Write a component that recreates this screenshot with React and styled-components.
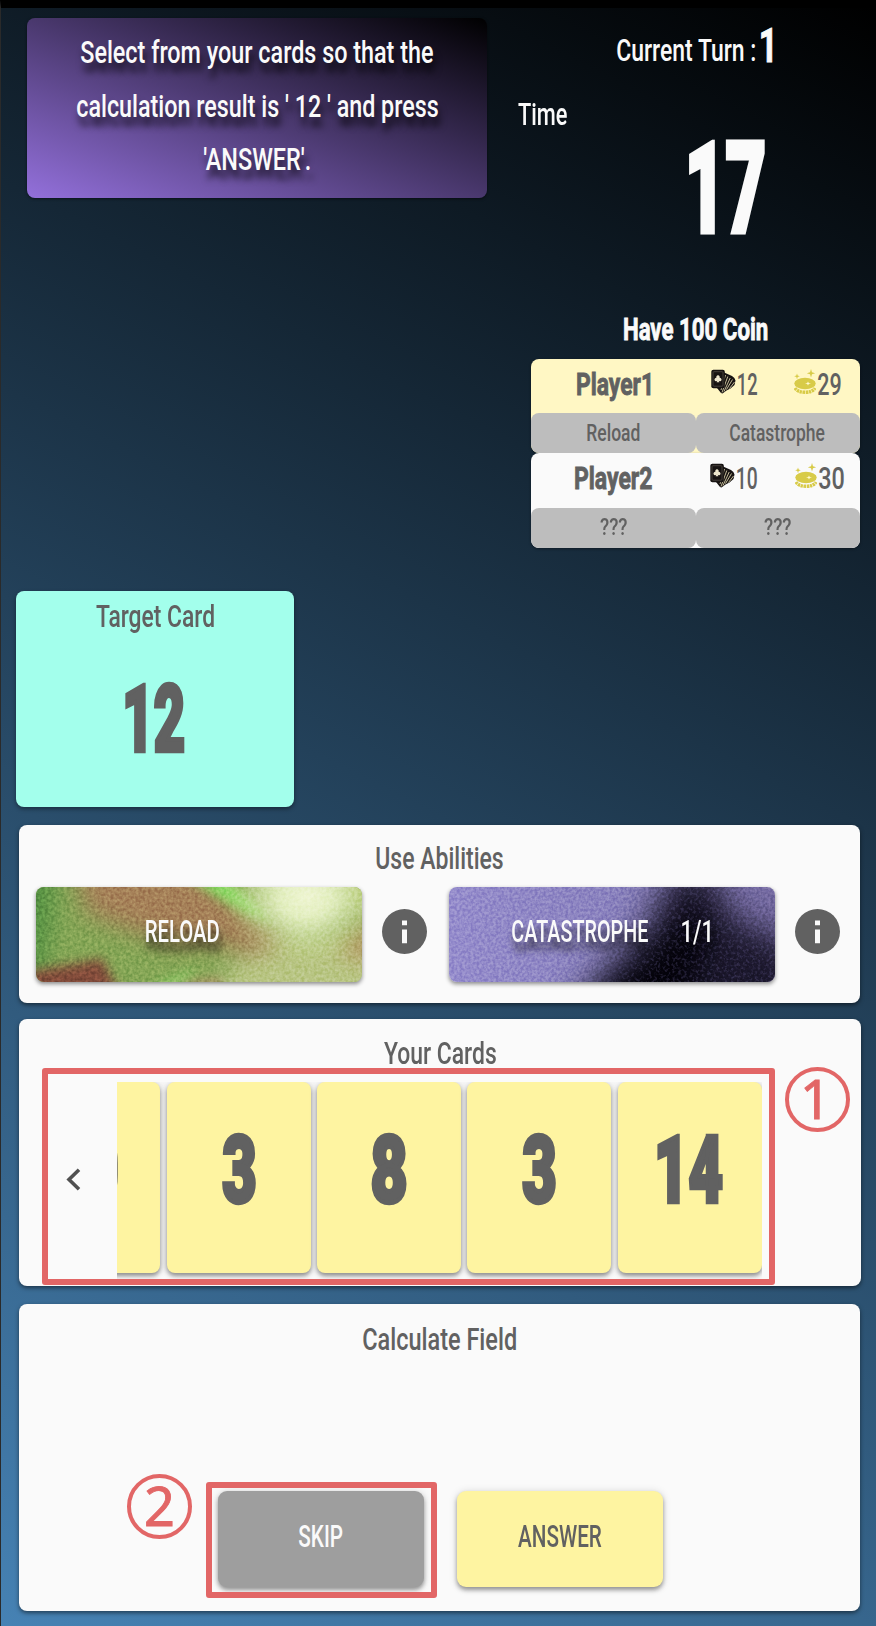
import React, { useLayoutEffect, useRef, useState } from "react";
import styled, { createGlobalStyle } from "styled-components";

const GlobalStyle = createGlobalStyle`
  * { box-sizing: border-box; }
  body { margin: 0; background: #000; font-family: Roboto, "Liberation Sans", sans-serif; }
`;

const INK = "#616161";
const PAPER = "#fafafa";
const RED = "#e26666";

/* ---------- condensed text ---------- */

const TextBox = styled.span`
  display: inline-block;
  flex: none;
  width: ${(p) => p.$width}px;
  line-height: ${(p) => p.$line}px;
  height: ${(p) => p.$line}px;
  font-size: ${(p) => p.$size}px;
  font-weight: ${(p) => p.$weight};
  -webkit-text-stroke: ${(p) => p.$stroke}px currentColor;
  text-align: left;
  white-space: pre;
`;

const TextInk = styled.span`
  display: inline-block;
  transform-origin: 0 50%;
`;

function Condensed({ children, width, size = 31, weight = 500, line = 30, stroke = 0 }) {
  const ref = useRef(null);
  const [transform, setTransform] = useState("none");
  useLayoutEffect(() => {
    const ctx = document.createElement("canvas").getContext("2d");
    ctx.font = getComputedStyle(ref.current).font;
    const m = ctx.measureText(children);
    const ink = m.actualBoundingBoxRight + m.actualBoundingBoxLeft + stroke;
    setTransform(`scaleX(${width / ink}) translateX(${m.actualBoundingBoxLeft + stroke / 2}px)`);
  }, [children, width, stroke]);
  return (
    <TextBox $width={width} $size={size} $weight={weight} $line={line} $stroke={stroke}>
      <TextInk ref={ref} style={{ transform }}>{children}</TextInk>
    </TextBox>
  );
}

/* ---------- page ---------- */

const Page = styled.main`
  position: relative;
  width: 876px;
  height: 1626px;
  overflow: hidden;
  border-top: 8px solid #000;
  border-left: 1px solid #2a2a2a;
  padding-left: 14px;
  color: ${PAPER};
  background: linear-gradient(27deg, #4682b4, #000);
`;

const TopArea = styled.div`
  display: flex;
  height: 583px;
`;

const Notice = styled.section`
  width: 460px;
  height: 179.5px;
  margin: 10px 0 0 12px;
  padding-top: 7.9px;
  display: flex;
  flex-direction: column;
  align-items: center;
  border-radius: 8px;
  background: linear-gradient(to top right, #9370db, #000);
  box-shadow: 0 1px 3px rgba(0, 0, 0, 0.5);
  text-shadow: 3px 9px 9px rgba(0, 0, 0, 0.75);
`;

const Status = styled.aside`
  width: 345px;
  margin-left: 28px;
  display: flex;
  flex-direction: column;
`;

const TurnLine = styled.div`
  display: flex;
  gap: 5px;
  align-items: flex-end;
  height: 63px;
  margin-left: 102px;
`;

const TurnNumber = styled.div`
  margin-bottom: 5.5px;
`;

const TimeLabel = styled.div`
  margin: 29px 0 0 3px;
  height: 30px;
`;

const TimeValue = styled.div`
  margin: 9px 0 0 174px;
  height: 100px;
`;

const CoinGoal = styled.div`
  margin: 75px 0 0 108.5px;
  height: 30px;
`;

const Players = styled.div`
  width: 329px;
  margin: 14.5px 0 0 16px;
`;

const PlayerCard = styled.div`
  height: 94.5px;
  border-radius: 8px;
  overflow: hidden;
  background: ${(p) => (p.$active ? "#fff7c4" : PAPER)};
  color: ${INK};
  box-shadow: 0 1px 3px rgba(0, 0, 0, 0.4);
`;

const PlayerHead = styled.div`
  height: 54.5px;
  padding-top: 10px;
  display: grid;
  grid-template-columns: 164.5px 82px 1fr;
`;

const PlayerName = styled.div`
  display: flex;
  justify-content: center;
`;

const Stat = styled.div`
  display: flex;
  gap: 2px;
  padding-left: ${(p) => p.$inset}px;
`;

const Chips = styled.div`
  display: grid;
  grid-template-columns: 1fr 1fr;
`;

const Chip = styled.div`
  height: 40px;
  border-radius: 8px;
  display: flex;
  justify-content: center;
  padding-top: 4.5px;
  background: #bdbdbd;
`;

const TargetCard = styled.section`
  width: 278px;
  height: 216px;
  margin-left: 0.6px;
  padding-top: 10.5px;
  border-radius: 8px;
  display: flex;
  flex-direction: column;
  align-items: center;
  gap: 47px;
  background: #a3ffec;
  color: ${INK};
  box-shadow: 0 2px 4px rgba(0, 0, 0, 0.4);
`;

const Panel = styled.section`
  width: ${(p) => p.$width || 841}px;
  height: ${(p) => p.$height}px;
  margin: ${(p) => p.$top}px 0 0 4px;
  padding-top: ${(p) => p.$pad}px;
  border-radius: 8px;
  background: ${PAPER};
  color: ${INK};
  box-shadow: 0 2px 4px rgba(0, 0, 0, 0.5);
`;

const PanelTitle = styled.div`
  display: flex;
  justify-content: center;
`;

/* ---------- abilities ---------- */

const AbilityRow = styled.div`
  display: grid;
  grid-template-columns: 326px 86.5px 326px 87px;
  margin: 12.5px 0 0 17px;
`;

const AbilityButton = styled.button`
  position: relative;
  height: 95.5px;
  padding: 0 ${(p) => p.$inset || 0}px 4px 0;
  border: 0;
  border-radius: 8px;
  overflow: hidden;
  display: flex;
  align-items: center;
  justify-content: center;
  gap: 34px;
  color: ${PAPER};
  font-family: inherit;
  text-shadow: 3px 9px 9px rgba(0, 0, 0, 0.7);
  filter: drop-shadow(0 2px 2px rgba(0, 0, 0, 0.45));
`;

const Texture = styled.svg`
  position: absolute;
  inset: 0;
  width: 100%;
  height: 100%;
`;

const Grain = styled.rect`
  mix-blend-mode: ${(p) => p.$blend};
`;

const Label = styled.span`
  position: relative;
  display: flex;
`;

const InfoCell = styled.div`
  display: flex;
  align-items: center;
  justify-content: center;
  padding: 0 1px 6px 0;
`;

function ReloadTexture() {
  return (
    <Texture viewBox="0 0 326 95" preserveAspectRatio="none">
      <defs>
        <filter id="soft" x="-30%" y="-50%" width="160%" height="200%" colorInterpolationFilters="sRGB">
          <feGaussianBlur stdDeviation="12" />
        </filter>
        <filter id="soft2" x="-30%" y="-50%" width="160%" height="200%" colorInterpolationFilters="sRGB">
          <feGaussianBlur stdDeviation="5.5" />
        </filter>
        <filter id="grain" colorInterpolationFilters="sRGB">
          <feTurbulence type="fractalNoise" baseFrequency="0.32" numOctaves="2" seed="4" />
          <feColorMatrix values="2 0 0 0 -0.5  2 0 0 0 -0.5  2 0 0 0 -0.5  0 0 0 0 1" />
        </filter>
        <radialGradient id="glow">
          <stop offset="0" stopColor="#f4f7dc" />
          <stop offset="0.3" stopColor="#eaf3ca" stopOpacity="0.9" />
          <stop offset="1" stopColor="#d6e79a" stopOpacity="0" />
        </radialGradient>
      </defs>
      <rect width="326" height="95" fill="#85a656" />
      <g filter="url(#soft)">
        <path d="M-30-30H20L15 40L5 95H-30Z" fill="#549142" />
        <path d="M35-30H155L215 30L262 58L215 68L175 56L140 58L90 42L50 26Z" fill="#a58058" />
        <path d="M170 110L200 72L255 50L350 45V120H150Z" fill="#b8c583" />
        <path d="M300 62L345 25V75Z" fill="#b5905f" />
        <path d="M305-20L350-20V20L312 22Z" fill="#a9bd62" />
      </g>
      <g filter="url(#soft2)">
        <path d="M-15 85L40 76L66 71L86 110H-15Z" fill="#814b3a" />
        <path d="M150-10L190-10L222 20L240 36L215 28L185 12Z" fill="#8ad964" />
        <path d="M125 94L160 82L150 100H110Z" fill="#8fcb68" />
        <path d="M150 94L185 90V104H140Z" fill="#a08a5d" />
      </g>
      <ellipse cx="270" cy="10" rx="84" ry="66" fill="url(#glow)" />
      <path d="M210-5L318 0V14L262 48Z" fill="#e8f4c4" opacity="0.45" filter="url(#soft)" />
      <Grain $blend="overlay" width="326" height="95" filter="url(#grain)" opacity="0.17" />
    </Texture>
  );
}

function CatastropheTexture() {
  return (
    <Texture viewBox="0 0 326 95" preserveAspectRatio="none">
      <defs>
        <filter id="dark" x="-60%" y="-80%" width="220%" height="260%" colorInterpolationFilters="sRGB">
          <feGaussianBlur stdDeviation="17" />
        </filter>
        <filter id="grain2" colorInterpolationFilters="sRGB">
          <feTurbulence type="fractalNoise" baseFrequency="0.36" numOctaves="2" seed="9" />
          <feColorMatrix values="2.4 0 0 0 -0.7  2.4 0 0 0 -0.7  2.4 0 0 0 -0.7  0 0 0 0 1" />
        </filter>
        <filter id="specks" colorInterpolationFilters="sRGB">
          <feTurbulence type="fractalNoise" baseFrequency="0.34" numOctaves="2" seed="21" />
          <feColorMatrix values="0 0 0 0 0.54  0 0 0 0 0.5  0 0 0 0 0.76  4 0 0 0 -1.9" />
        </filter>
        <linearGradient id="violet">
          <stop offset="0" stopColor="#958ccc" />
          <stop offset="0.5" stopColor="#8a82be" />
          <stop offset="1" stopColor="#73699f" />
        </linearGradient>
        <linearGradient id="fade">
          <stop offset="0.3" stopColor="#000" />
          <stop offset="0.6" stopColor="#fff" />
        </linearGradient>
        <mask id="rightSide"><rect width="326" height="95" fill="url(#fade)" /></mask>
      </defs>
      <rect width="326" height="95" fill="url(#violet)" />
      <g filter="url(#dark)">
        <path d="M225-20L262-20L285 30L350 60V135H115L155 80L195 45Z" fill="#05030f" opacity="0.82" />
        <path d="M238 15L262 20L255 70L240 135H130L180 80Z" fill="#020108" />
      </g>
      <Grain $blend="overlay" width="326" height="95" filter="url(#grain2)" opacity="0.14" />
      <g mask="url(#rightSide)">
        <rect width="326" height="95" filter="url(#specks)" opacity="0.22" />
      </g>
    </Texture>
  );
}

const InfoIcon = () => (
  <svg width="45" height="45" viewBox="0 0 45 45">
    <circle cx="22.5" cy="22.5" r="22.5" fill={INK} />
    <path d="M20 11.5h5v4.7h-5zM20 20.5h5v13.7h-5z" fill={PAPER} />
  </svg>
);

const CardsIcon = () => (
  <svg width="25" height="26" viewBox="0 0 25 26">
    <path d="M12 3l9 4q3 1.500 3.500 4.500l-1 4.500-4 3.500-4 2-4 3-1.500-.5L6 19z" fill="#171312" />
    <path d="M14.500 6L10 21M16.800 7.500L11 23.500M19.200 9L13 22.500M21.500 10.500L15.500 20.500M23.500 13L18.500 19.500" stroke="#d8cfa8" strokeWidth="0.9" fill="none" />
    <rect x="0.3" y="0.8" width="13.500" height="18.500" rx="2" fill="#171312" />
    <rect x="2" y="2.700" width="10" height="14.500" rx="1" fill="none" stroke="#514b45" strokeWidth="0.8" />
    <path d="M7 6.300a1.700 1.700 0 0 1 1.500 2.600 1.700 1.700 0 1 1-.8 2.900l.7 1.400H5.600l.7-1.400a1.700 1.700 0 1 1-.8-2.900A1.700 1.700 0 0 1 7 6.300Z" fill="#eee7cd" />
  </svg>
);

const CoinIcon = () => (
  <svg width="22" height="26" viewBox="0 0 22 26">
    <g fill="#d8cb48">
      <path d="M17 0l1 3.200 3.200 1-3.200 1-1 3.400-1-3.400-3.200-1 3.200-1zM3 4.500l.7 2.100 2.100.7-2.100.7L3 10.200 2.300 8 .2 7.300l2.100-.7z" />
      <ellipse cx="11" cy="14.500" rx="10.700" ry="5.800" />
    </g>
    <path d="M1 19q2.500 4.300 10 4.300T21 19" fill="none" stroke="#d8cb48" strokeWidth="3.400" strokeDasharray="2.400 .6" />
    <path d="M14 12.500l.8 1.600 2.200.4-2.200.5-.8 1.600-.8-1.600-2.200-.5 2.200-.4z" fill="#fff9d0" />
  </svg>
);

/* ---------- hand ---------- */

const Hand = styled.div`
  display: flex;
  margin: 13.5px 0 0 28px;
  height: 199px;
`;

const ArrowCell = styled.div`
  width: 70px;
  padding: 86px 0 0 18.5px;
`;

const CardStrip = styled.div`
  width: 644.5px;
  height: 199px;
  display: flex;
  justify-content: flex-end;
  gap: 6.3px;
  overflow: hidden;
`;

const NumberCard = styled.div`
  flex: none;
  width: 144px;
  height: 190.5px;
  padding-top: 47.5px;
  display: flex;
  justify-content: center;
  border-radius: 8px;
  background: #fef4a1;
  box-shadow: 0 3px 4px rgba(0, 0, 0, 0.35), 0 1px 8px rgba(0, 0, 0, 0.18);
`;

const Actions = styled.div`
  display: flex;
  justify-content: center;
  gap: 33px;
  margin: 136px 0 0 1px;
`;

const ActionButton = styled.button`
  width: 206px;
  height: 96px;
  padding: 0 0 4.5px;
  border: 0;
  border-radius: 9px;
  display: flex;
  align-items: center;
  justify-content: center;
  font-family: inherit;
  color: ${(p) => (p.$muted ? PAPER : INK)};
  background: ${(p) => (p.$muted ? "#9e9e9e" : "#fef4a1")};
  box-shadow: 0 3px 4px rgba(0, 0, 0, 0.35), 0 1px 9px rgba(0, 0, 0, 0.15);
`;

/* ---------- annotations over the page ---------- */

const Marker = styled.div`
  position: absolute;
  left: ${(p) => p.$x}px;
  top: ${(p) => p.$y}px;
  width: ${(p) => p.$w}px;
  height: ${(p) => p.$h}px;
  border: 6px solid ${RED};
  border-radius: 3px;
`;

const Step = styled.div`
  position: absolute;
  left: ${(p) => p.$x}px;
  top: ${(p) => p.$y}px;
  width: 65px;
  height: 65px;
  border: 4px solid ${RED};
  border-radius: 50%;
  color: ${RED};
  text-align: center;
  font: 54px/54px "Noto Sans", sans-serif;
  -webkit-text-stroke: 0.9px ${RED};
  padding-right: ${(p) => p.$nudge || 0}px;
`;

function Player({ active, name, nameWidth, cards, cardsWidth, coins, coinsWidth, skills }) {
  return (
    <PlayerCard $active={active}>
      <PlayerHead>
        <PlayerName><Condensed width={nameWidth} size={32} weight={700} stroke={0.9}>{name}</Condensed></PlayerName>
        <Stat $inset={active ? 15 : 14}><CardsIcon /><Condensed width={cardsWidth} size={32}>{cards}</Condensed></Stat>
        <Stat $inset={active ? 16 : 17}><CoinIcon /><Condensed width={coinsWidth} size={32}>{coins}</Condensed></Stat>
      </PlayerHead>
      <Chips>
        {skills.map(([text, width], i) => (
          <Chip key={i}><Condensed width={width} size={24}>{text}</Condensed></Chip>
        ))}
      </Chips>
    </PlayerCard>
  );
}

const HAND = [["10", 60], ["3", 34], ["8", 36], ["3", 34], ["14", 66]];

export default function App() {
  return (
    <>
      <GlobalStyle />
      <Page>
        <TopArea>
          <Notice>
            <Condensed width={352} line={53.7}>Select from your cards so that the</Condensed>
            <Condensed width={361} line={53.7}>calculation result is ' 12 ' and press</Condensed>
            <Condensed width={106} line={53.7}>'ANSWER'.</Condensed>
          </Notice>
          <Status>
            <TurnLine>
              <Condensed width={139} line={40}>Current Turn :</Condensed>
              <TurnNumber><Condensed width={11.5} size={49} weight={700} line={40} stroke={1}>1</Condensed></TurnNumber>
            </TurnLine>
            <TimeLabel><Condensed width={49}>Time</Condensed></TimeLabel>
            <TimeValue><Condensed width={76} size={127} weight={900} line={100} stroke={5}>17</Condensed></TimeValue>
            <CoinGoal><Condensed width={144} size={32} weight={700} stroke={0.9}>Have 100 Coin</Condensed></CoinGoal>
            <Players>
              <Player active name="Player1" nameWidth={73.5} cards="12" cardsWidth={19} coins="29" coinsWidth={23}
                skills={[["Reload", 53], ["Catastrophe", 95]]} />
              <Player name="Player2" nameWidth={77.5} cards="10" cardsWidth={20} coins="30" coinsWidth={25}
                skills={[["???", 27], ["???", 27]]} />
            </Players>
          </Status>
        </TopArea>

        <TargetCard>
          <Condensed width={118}>Target Card</Condensed>
          <Condensed width={59.5} size={93.5} weight={900} line={80} stroke={4.5}>12</Condensed>
        </TargetCard>

        <Panel $top={18} $height={177.5} $pad={19}>
          <PanelTitle><Condensed width={127}>Use Abilities</Condensed></PanelTitle>
          <AbilityRow>
            <AbilityButton $inset={33}>
              <ReloadTexture />
              <Label><Condensed width={73}>RELOAD</Condensed></Label>
            </AbilityButton>
            <InfoCell><InfoIcon /></InfoCell>
            <AbilityButton $inset={1}>
              <CatastropheTexture />
              <Label><Condensed width={136}>CATASTROPHE</Condensed></Label>
              <Label><Condensed width={28}>1/1</Condensed></Label>
            </AbilityButton>
            <InfoCell><InfoIcon /></InfoCell>
          </AbilityRow>
        </Panel>

        <Panel $top={16.8} $height={266.5} $width={842} $pad={19.5}>
          <PanelTitle><Condensed width={112}>Your Cards</Condensed></PanelTitle>
          <Hand>
            <ArrowCell>
              <svg width="16" height="24" viewBox="0 0 16 24">
                <path d="M13 1.800L3 11.500L13 21.200" fill="none" stroke="#505050" strokeWidth="3.600" />
              </svg>
            </ArrowCell>
            <CardStrip>
              {HAND.map(([n, width], i) => (
                <NumberCard key={i}>
                  <Condensed width={width} size={93.5} weight={900} line={80} stroke={4.5}>{n}</Condensed>
                </NumberCard>
              ))}
            </CardStrip>
          </Hand>
        </Panel>

        <Panel $top={18.7} $height={307} $pad={20.3}>
          <PanelTitle><Condensed width={153}>Calculate Field</Condensed></PanelTitle>
          <Actions>
            <ActionButton $muted><Condensed width={43.5}>SKIP</Condensed></ActionButton>
            <ActionButton><Condensed width={83.5}>ANSWER</Condensed></ActionButton>
          </Actions>
        </Panel>

        <Marker $x={41} $y={1060} $w={733} $h={217} />
        <Marker $x={204.5} $y={1474} $w={231.5} $h={116} />
        <Step $x={784} $y={1058.5} $nudge={4}>1</Step>
        <Step $x={126} $y={1465.5}>2</Step>
      </Page>
    </>
  );
}
